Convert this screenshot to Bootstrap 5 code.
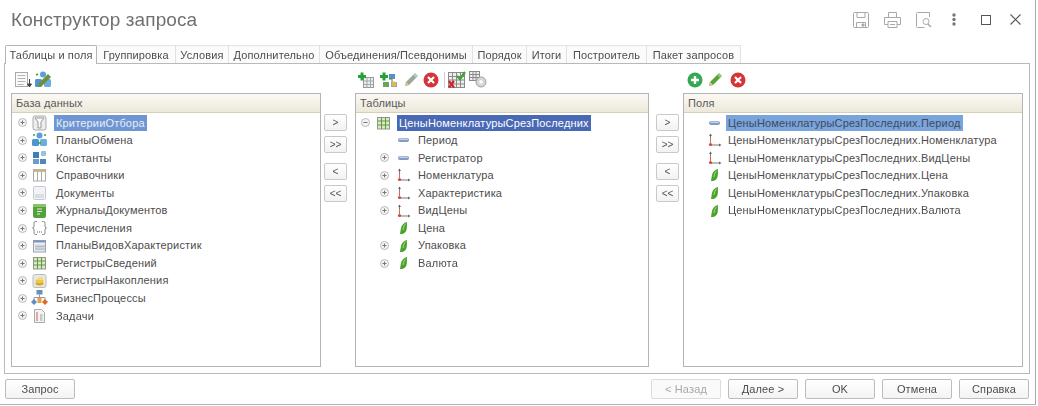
<!DOCTYPE html>
<html lang="ru">
<head>
<meta charset="utf-8">
<title>Конструктор запроса</title>
<link href="https://cdn.jsdelivr.net/npm/bootstrap@5.3.0/dist/css/bootstrap.min.css" rel="stylesheet">
<style>
html,body{margin:0;height:100%;background:#fff;overflow:hidden}
body{font-family:"Liberation Sans",Arial,sans-serif;font-size:11px;color:#4d4d4d}
.win{width:1036px;height:405px;border-right:1px solid #a9a9a9;border-bottom:1px solid #b5b5b5;padding:0 5px 0 4px;flex-direction:column;filter:blur(.4px)}
.ttl{height:45px;padding-left:7px}
.ttl h1{font-size:19px;font-weight:400;color:#707070;margin:0;padding-bottom:5px;letter-spacing:.1px}
.tico{margin-right:9px;padding-bottom:6px}
.tico svg{display:block}
.tabs{gap:0;height:18px;padding-left:1px;border:0;flex-wrap:nowrap;position:relative;z-index:1}
.tabs .nav-link{display:block;height:18px;font-size:11px;line-height:16px;color:#4d4d4d;padding:1px 0 0;text-align:center;border:1px solid #e2e2e2;border-bottom:0;border-left:0;border-radius:0;margin:0;background:#fbfbfb;letter-spacing:.13px;white-space:nowrap}
.tabs .nav-link.active{height:19px;border:1px solid #b4b4b4;border-bottom:0;border-radius:2px 2px 0 0;background:#fff;color:#4d4d4d}
.pane{height:311px;border:1px solid #b9b9b9;padding:0 6px 6px;background:#fff}
.cola{width:310px}.colb{width:294px}.colc{width:340px}
.bar{height:29px;padding:2px 0 0 3px}
.bar svg{display:block}
.box{flex:1;border:1px solid #b4b4b4;min-height:0;background:#fff}
.hdr{height:19px;line-height:18px;padding-left:4px;background:linear-gradient(#faf9f4,#ede9da);border-bottom:1px solid #d6d0b8;color:#5a5a5a;letter-spacing:.1px}
.tree{list-style:none;margin:1px 0 0;padding:0}
.tree li{height:17.56px;display:flex;align-items:center;white-space:nowrap;letter-spacing:.17px}
.exp{width:9px;height:9px;flex:none;display:block}
.sel{padding:0 2px;margin-left:-2px;height:16.5px;line-height:16.5px;display:inline-block}
.sela{background:#6d96d2;color:#e9eef8}
.selb{background:#4a69b5;color:#fff}
.selc{background:#79a4dc;color:#3f4a5c}
.ic{width:17px;height:16px;flex:none;display:block}
.t1 li{padding-left:6px}.t1 .exp{margin-right:4px}.t1 .ic{margin-right:8px}
.t2 .lv0{padding-left:5px}.t2 .lv0 .exp{margin-right:5px}.t2 .lv0 .ic{margin-right:7px}
.t2 .lv1{padding-left:24px}.t2 .lv1 .exp{margin-right:6px}.t2 .lv1 .ic{margin-right:6px}
.t3 li{padding-left:22px}.t3 .ic{margin-right:5px}
.gut{width:34px;padding:50px 0 0 3px;gap:5px;flex:none}
.gut2{padding-left:7px}
.mini{width:23px;height:17px;padding:0;font-size:10px;line-height:14px;--bs-btn-border-radius:2px;color:#555;background:linear-gradient(#fff,#f2f2f2);border:1px solid #c9c9c9;font-family:"Liberation Sans",Arial,sans-serif}
.mini.gapb{margin-top:5px}
.foot{height:30px;padding:5px 1px 0 1px;gap:7px;flex:none}
.fbtn{width:70px;height:20px;padding:0;font-size:11px;line-height:17px;color:#4d4d4d;background:linear-gradient(#fff,#f3f3f3);border:1px solid #bcbcbc;--bs-btn-border-radius:2px;font-family:"Liberation Sans",Arial,sans-serif;letter-spacing:.13px}
.fbtn:disabled{color:#a9a9a9;border-color:#dcdcdc;opacity:1;background:#fafafa}
.ms{margin-left:auto}
.sep{width:1px;height:16px;background:#cfcfcf}
.m2{margin-left:2px}.m3{margin-left:3px}.m4{margin-left:4px}.m5{margin-left:5px}.m6{margin-left:6px}.m15{margin-left:15px}.m19{margin-left:19px}.m20{margin-left:20px}.m25{margin-left:25px}
.pen-g{color:#9aa89a}.pen-c{color:#58a632}
.sprite{position:absolute}
</style>
</head>
<body>
<svg width="0" height="0" class="sprite">
<defs>
<symbol id="exp" viewBox="0 0 9 9"><circle cx="4.500" cy="4.500" r="4" fill="#f4f4f4" stroke="#b9b9b9"/><path d="M2.500 4.500h4M4.500 2.500v4" stroke="#777" fill="none"/></symbol>
<symbol id="col" viewBox="0 0 9 9"><circle cx="4.500" cy="4.500" r="4" fill="#f4f4f4" stroke="#b9b9b9"/><path d="M2.500 4.500h4" stroke="#777" fill="none"/></symbol>
<symbol id="dash" viewBox="0 0 17 16"><rect x="3" y="6" width="11" height="4" rx="2" fill="#7f9cc4"/><rect x="4" y="6.500" width="9" height="1.500" rx=".7" fill="#c4d4ea"/></symbol>
<symbol id="ref" viewBox="0 0 17 16"><path d="M4.500 2v11h9" stroke="#7a7a7a" fill="none"/><path d="M3 4l1.500-2.500L6 4z" fill="#666"/><path d="M13 11.500l2.500 1.500-2.500 1.500z" fill="#666"/><circle cx="4.500" cy="12.500" r="1.600" fill="#d24a3a"/><path d="M4.500 6v6" stroke="#d86a5c"/></symbol>
<symbol id="leaf" viewBox="0 0 17 16"><path d="M12 2C8.800 2.800 6.600 5 6 8c-.4 2-.7 4-1 6 1.200.2 2.600.1 3.500-.4 1.800-.9 2.900-2.600 3.200-4.600.3-2.300.4-4.600.3-7z" fill="#4aa32c"/><path d="M11 3.500C9.400 5 8.200 7 8 10" stroke="#a4dc7c" fill="none"/></symbol>
<symbol id="reg" viewBox="0 0 17 16"><rect x="2.500" y="2.500" width="12" height="11.500" fill="#dfe6cf" stroke="#8f9a84"/><path d="M2.500 6h12M2.500 10h12M6.500 2.500v11.500M10.500 2.500v11.500" stroke="#5c9a3c" fill="none"/></symbol>
<symbol id="crit" viewBox="0 0 17 16"><rect x="2" y="1" width="13" height="14" rx="2" fill="#eee" stroke="#aaa"/><path d="M4 3h9l-3 4v6H7V7z" fill="#fafafa" stroke="#999"/></symbol>
<symbol id="exch" viewBox="0 0 17 16"><circle cx="8.500" cy="3.500" r="3" fill="#5c9fd8"/><rect x="1" y="7" width="7" height="7" rx="1.500" fill="#4d94d0"/><rect x="9" y="7" width="7" height="7" rx="1.500" fill="#6aaee0"/><path d="M2 3l2 0M13 3l2 0M7 11h3" stroke="#39a537" stroke-width="1.500"/></symbol>
<symbol id="const" viewBox="0 0 17 16"><rect x="2" y="2" width="6" height="6" fill="#3f7fb8"/><rect x="10" y="1" width="5" height="5" rx="1" fill="#9cc0de"/><rect x="2" y="9" width="6" height="5" fill="#6b9cc4"/><rect x="9" y="9" width="6" height="5" fill="#4c88bc"/></symbol>
<symbol id="cat" viewBox="0 0 17 16"><rect x="2.500" y="2.500" width="12" height="11.500" fill="#fff" stroke="#aaa"/><rect x="2.500" y="2.500" width="12" height="2.500" fill="#c9b88c"/><path d="M6.500 5v9M10.500 5v9" stroke="#a9a9a9"/></symbol>
<symbol id="doc" viewBox="0 0 17 16"><rect x="2.500" y="1.500" width="12" height="13" rx="1" fill="#f1f3f6" stroke="#c5cad2"/><rect x="4" y="9" width="9" height="4" fill="#d8dee8"/></symbol>
<symbol id="jour" viewBox="0 0 17 16"><rect x="2" y="1" width="13" height="14" rx="2" fill="#54a03e"/><rect x="2" y="1" width="13" height="3" fill="#8ac36a"/><path d="M6 6h5M6 8.500h5M6 11h3" stroke="#dff0d4"/></symbol>
<symbol id="enum" viewBox="0 0 17 16"><path d="M6 1.500H4.500Q3 1.500 3 3v4l-1.500 1L3 9v4q0 1.500 1.500 1.500H6M11 1.500h1.500Q14 1.500 14 3v4l1.500 1L14 9v4q0 1.500-1.500 1.500H11" fill="none" stroke="#8b8b8b"/><path d="M6 12h1M8 12h1M10 12h1" stroke="#666"/></symbol>
<symbol id="pvh" viewBox="0 0 17 16"><rect x="2.500" y="2.500" width="12" height="11.500" fill="#eef1f5" stroke="#9aa2ac"/><rect x="2.500" y="2.500" width="12" height="2" fill="#7d97b8"/><path d="M5 6.500v6M7 6.500v6M9 6.500v6M11 6.500v6M13 6.500v6M4 8.500h9.500M4 11h9.500" stroke="#b3bac4"/></symbol>
<symbol id="nak" viewBox="0 0 17 16"><rect x="2" y="1.500" width="13" height="13" rx="2" fill="#e9e9e4" stroke="#bbb"/><ellipse cx="8.500" cy="10.500" rx="4" ry="2" fill="#d9a92b"/><ellipse cx="8.500" cy="8" rx="4" ry="2" fill="#eec84a"/><ellipse cx="9.500" cy="5.500" rx="3" ry="1.500" fill="#f6dd7c"/></symbol>
<symbol id="biz" viewBox="0 0 17 16"><rect x="5.500" y="0" width="6" height="4.500" fill="#6a90b8"/><path d="M8.500 4.500v3M3 11V7.500h11V11" stroke="#999" fill="none"/><path d="M3 9l3 3-3 3-3-3z" fill="#5c8fc0"/><path d="M14 9l3 3-3 3-3-3z" fill="#db6b2b"/><rect x="6.500" y="8" width="4" height="5" fill="#e8a04a"/></symbol>
<symbol id="task" viewBox="0 0 17 16"><path d="M3.500 1.500h7l3 3v10h-10z" fill="#f4f4f4" stroke="#aaa"/><rect x="5" y="4" width="2" height="9" fill="#e2a8a0"/><rect x="9" y="6" width="2.500" height="7" fill="#c8c8c8"/></symbol>
<symbol id="addt" viewBox="0 0 16 16"><rect x="5.500" y="5.500" width="10" height="10" fill="#e9eef0" stroke="#999"/><path d="M5.500 9h10M5.500 12.500h10M9 5.500v10M12.500 5.500v10" stroke="#a8a8a8"/><path d="M0 4.500h8M4 .5v8" stroke="#28a038" stroke-width="3"/></symbol>
<symbol id="addq" viewBox="0 0 17 16"><path d="M0 4.500h8M4 .5v8" stroke="#28a038" stroke-width="3"/><rect x="9" y="2" width="6" height="5" fill="#5d8fc4"/><rect x="3" y="10" width="6" height="5" fill="#6aa55a"/><rect x="11" y="10" width="6" height="5" fill="#7fa8d0"/><path d="M9 7h3v3" fill="none" stroke="#28a038"/><circle cx="14" cy="12" r="2.500" fill="#e1b84a"/></symbol>
<symbol id="pen" viewBox="0 0 18 18"><path d="M13 2l3 3-9 9-4 1 1-4z" fill="currentColor"/><path d="M13 2l3 3-2 2-3-3z" fill="#fff" opacity=".35"/><path d="M3 15l1-4 3 3z" fill="#d8c89c"/></symbol>
<symbol id="del" viewBox="0 0 18 18"><circle cx="9" cy="9" r="7.500" fill="#d4353a"/><path d="M6 6l6 6M12 6l-6 6" stroke="#fff" stroke-width="2.200"/></symbol>
<symbol id="plus" viewBox="0 0 18 18"><circle cx="9" cy="9" r="7.500" fill="#34a853"/><path d="M9 5v8M5 9h8" stroke="#fff" stroke-width="2.400"/></symbol>
<symbol id="grid2" viewBox="0 0 18 18"><rect x=".5" y="1.500" width="16" height="15" fill="#eee" stroke="#8a8a8a"/><path d="M.5 5.500h16M.5 9h16M.5 13h16M4.500 1.500v15M8.500 1.500v15M12.500 1.500v15" stroke="#8a8a8a"/><path d="M9 5l3 3 5-7" stroke="#3aa52f" stroke-width="2.200" fill="none"/><path d="M1 10l5 6.500M6 10l-5 6.500" stroke="#d4232a" stroke-width="2.200"/></symbol>
<symbol id="gridg" viewBox="0 0 19 18"><rect x=".5" y=".5" width="10" height="9" fill="#eee" stroke="#8a8a8a"/><path d="M.5 3.500h10M.5 6.500h10M4 .5v9M7 .5v9" stroke="#8a8a8a"/><circle cx="12" cy="11" r="5" fill="#d6d6d6" stroke="#a0a0a0"/><circle cx="12" cy="11" r="1.800" fill="#fff"/></symbol>
<symbol id="list" viewBox="0 0 18 18"><rect x="1.500" y="1.500" width="12" height="14" fill="#fafafa" stroke="#aaa"/><path d="M3.500 4.500h8M3.500 7.500h8M3.500 10.500h8M3.500 13.500h6" stroke="#b5b5b5"/><path d="M15.500 8v7M13.500 13l2 3 2-3z" stroke="#444" fill="#444"/></symbol>
<symbol id="chart" viewBox="0 0 18 18"><circle cx="9" cy="3.500" r="3" fill="#5c9fd8"/><rect x="1" y="8" width="7" height="8" rx="1.500" fill="#4d94d0"/><rect x="10" y="8" width="7" height="8" rx="1.500" fill="#6aaee0"/><path d="M14 3l3 3-9 9-4 1 1-4z" fill="#6f8f3a"/><path d="M2 4l2-1" stroke="#39a537" stroke-width="1.500"/></symbol>
</defs>
</svg>
<div class="win d-flex">
  <div class="ttl d-flex align-items-center justify-content-between">
    <h1>Конструктор запроса</h1>
    <div class="tico d-flex align-items-center">
      <svg width="16" height="16" viewBox="0 0 16 16" fill="none" stroke="#a8a8a8"><path d="M.5 1.500a1 1 0 0 1 1-1h13a1 1 0 0 1 1 1v13a1 1 0 0 1-1 1h-13a1 1 0 0 1-1-1z"/><path d="M4 .5v5h8v-5M3.500 15.500v-5h9v5"/><path d="M9 12h2v2H9z" fill="#a8a8a8"/></svg>
      <svg class="m15" width="17" height="16" viewBox="0 0 17 16" fill="none" stroke="#a8a8a8"><path d="M4.500 5V.5h8V5M4 12.500H.5v-7h16v7H13"/><path d="M4 9.500h9v6H4zM6 12.500h5"/></svg>
      <svg class="m15" width="16" height="16" viewBox="0 0 16 16" fill="none" stroke="#a8a8a8"><path d="M13.500.5h-12a1 1 0 0 0-1 1v13a1 1 0 0 0 1 1h7M13.500.5V5"/><circle cx="10" cy="9.500" r="3"/><path d="M12 12l3 3" stroke-width="1.500"/></svg>
      <svg class="m20" width="4" height="13" viewBox="0 0 4 13" fill="#777"><circle cx="2" cy="2" r="1.700"/><circle cx="2" cy="6.500" r="1.700"/><circle cx="2" cy="11" r="1.700"/></svg>
      <svg class="m25" width="10" height="10" viewBox="0 0 10 10" fill="none" stroke="#555"><rect x=".5" y=".5" width="9" height="9"/></svg>
      <svg class="m19" width="11" height="11" viewBox="0 0 11 11" fill="none" stroke="#555" stroke-width="1.100"><path d="M.5.5l10 10M10.500.5l-10 10"/></svg>
    </div>
  </div>
  <ul class="nav nav-tabs tabs">
    <li class="nav-item"><a class="nav-link active" style="width:92px" href="#">Таблицы и поля</a></li>
    <li class="nav-item"><a class="nav-link" style="width:79px" href="#">Группировка</a></li>
    <li class="nav-item"><a class="nav-link" style="width:53px" href="#">Условия</a></li>
    <li class="nav-item"><a class="nav-link" style="width:91px" href="#">Дополнительно</a></li>
    <li class="nav-item"><a class="nav-link" style="width:153px" href="#">Объединения/Псевдонимы</a></li>
    <li class="nav-item"><a class="nav-link" style="width:54px" href="#">Порядок</a></li>
    <li class="nav-item"><a class="nav-link" style="width:40px" href="#">Итоги</a></li>
    <li class="nav-item"><a class="nav-link" style="width:80px" href="#">Построитель</a></li>
    <li class="nav-item"><a class="nav-link" style="width:94px" href="#">Пакет запросов</a></li>
  </ul>
  <div class="pane d-flex">
    <div class="cola d-flex flex-column">
      <div class="bar d-flex align-items-center">
        <svg width="18" height="18"><use href="#list"/></svg>
        <svg class="m2" width="18" height="18"><use href="#chart"/></svg>
      </div>
      <div class="box">
        <div class="hdr">База данных</div>
        <ul class="tree t1">
          <li><svg class="exp"><use href="#exp"/></svg><svg class="ic"><use href="#crit"/></svg><span class="sel sela">КритерииОтбора</span></li>
          <li><svg class="exp"><use href="#exp"/></svg><svg class="ic"><use href="#exch"/></svg><span>ПланыОбмена</span></li>
          <li><svg class="exp"><use href="#exp"/></svg><svg class="ic"><use href="#const"/></svg><span>Константы</span></li>
          <li><svg class="exp"><use href="#exp"/></svg><svg class="ic"><use href="#cat"/></svg><span>Справочники</span></li>
          <li><svg class="exp"><use href="#exp"/></svg><svg class="ic"><use href="#doc"/></svg><span>Документы</span></li>
          <li><svg class="exp"><use href="#exp"/></svg><svg class="ic"><use href="#jour"/></svg><span>ЖурналыДокументов</span></li>
          <li><svg class="exp"><use href="#exp"/></svg><svg class="ic"><use href="#enum"/></svg><span>Перечисления</span></li>
          <li><svg class="exp"><use href="#exp"/></svg><svg class="ic"><use href="#pvh"/></svg><span>ПланыВидовХарактеристик</span></li>
          <li><svg class="exp"><use href="#exp"/></svg><svg class="ic"><use href="#reg"/></svg><span>РегистрыСведений</span></li>
          <li><svg class="exp"><use href="#exp"/></svg><svg class="ic"><use href="#nak"/></svg><span>РегистрыНакопления</span></li>
          <li><svg class="exp"><use href="#exp"/></svg><svg class="ic"><use href="#biz"/></svg><span>БизнесПроцессы</span></li>
          <li><svg class="exp"><use href="#exp"/></svg><svg class="ic"><use href="#task"/></svg><span>Задачи</span></li>
        </ul>
      </div>
    </div>
    <div class="gut d-flex flex-column align-items-start">
      <button class="btn mini" type="button">&gt;</button>
      <button class="btn mini" type="button">&gt;&gt;</button>
      <button class="btn mini gapb" type="button">&lt;</button>
      <button class="btn mini" type="button">&lt;&lt;</button>
    </div>
    <div class="colb d-flex flex-column">
      <div class="bar d-flex align-items-center">
        <svg width="16" height="16"><use href="#addt"/></svg>
        <svg class="m6" width="17" height="16"><use href="#addq"/></svg>
        <svg class="m5 pen-g" width="18" height="18"><use href="#pen"/></svg>
        <svg class="m2" width="18" height="18"><use href="#del"/></svg>
        <span class="sep m4"></span>
        <svg class="m3" width="18" height="18"><use href="#grid2"/></svg>
        <svg class="m3" width="19" height="18"><use href="#gridg"/></svg>
      </div>
      <div class="box">
        <div class="hdr">Таблицы</div>
        <ul class="tree t2">
          <li class="lv0"><svg class="exp"><use href="#col"/></svg><svg class="ic"><use href="#reg"/></svg><span class="sel selb">ЦеныНоменклатурыСрезПоследних</span></li>
          <li class="lv1"><span class="exp"></span><svg class="ic"><use href="#dash"/></svg><span>Период</span></li>
          <li class="lv1"><svg class="exp"><use href="#exp"/></svg><svg class="ic"><use href="#dash"/></svg><span>Регистратор</span></li>
          <li class="lv1"><svg class="exp"><use href="#exp"/></svg><svg class="ic"><use href="#ref"/></svg><span>Номенклатура</span></li>
          <li class="lv1"><svg class="exp"><use href="#exp"/></svg><svg class="ic"><use href="#ref"/></svg><span>Характеристика</span></li>
          <li class="lv1"><svg class="exp"><use href="#exp"/></svg><svg class="ic"><use href="#ref"/></svg><span>ВидЦены</span></li>
          <li class="lv1"><span class="exp"></span><svg class="ic"><use href="#leaf"/></svg><span>Цена</span></li>
          <li class="lv1"><svg class="exp"><use href="#exp"/></svg><svg class="ic"><use href="#leaf"/></svg><span>Упаковка</span></li>
          <li class="lv1"><svg class="exp"><use href="#exp"/></svg><svg class="ic"><use href="#leaf"/></svg><span>Валюта</span></li>
        </ul>
      </div>
    </div>
    <div class="gut gut2 d-flex flex-column align-items-start">
      <button class="btn mini" type="button">&gt;</button>
      <button class="btn mini" type="button">&gt;&gt;</button>
      <button class="btn mini gapb" type="button">&lt;</button>
      <button class="btn mini" type="button">&lt;&lt;</button>
    </div>
    <div class="colc d-flex flex-column">
      <div class="bar d-flex align-items-center">
        <svg width="18" height="18"><use href="#plus"/></svg>
        <svg class="m2 pen-c" width="18" height="18"><use href="#pen"/></svg>
        <svg class="m5" width="18" height="18"><use href="#del"/></svg>
      </div>
      <div class="box">
        <div class="hdr">Поля</div>
        <ul class="tree t3">
          <li><svg class="ic"><use href="#dash"/></svg><span class="sel selc">ЦеныНоменклатурыСрезПоследних.Период</span></li>
          <li><svg class="ic"><use href="#ref"/></svg><span>ЦеныНоменклатурыСрезПоследних.Номенклатура</span></li>
          <li><svg class="ic"><use href="#ref"/></svg><span>ЦеныНоменклатурыСрезПоследних.ВидЦены</span></li>
          <li><svg class="ic"><use href="#leaf"/></svg><span>ЦеныНоменклатурыСрезПоследних.Цена</span></li>
          <li><svg class="ic"><use href="#leaf"/></svg><span>ЦеныНоменклатурыСрезПоследних.Упаковка</span></li>
          <li><svg class="ic"><use href="#leaf"/></svg><span>ЦеныНоменклатурыСрезПоследних.Валюта</span></li>
        </ul>
      </div>
    </div>
  </div>
  <div class="foot d-flex align-items-start">
    <button class="btn fbtn" type="button">Запрос</button>
    <button class="btn fbtn ms" type="button" disabled>&lt; Назад</button>
    <button class="btn fbtn" type="button">Далее &gt;</button>
    <button class="btn fbtn" type="button">OK</button>
    <button class="btn fbtn" type="button">Отмена</button>
    <button class="btn fbtn" type="button">Справка</button>
  </div>
</div>
</body>
</html>
